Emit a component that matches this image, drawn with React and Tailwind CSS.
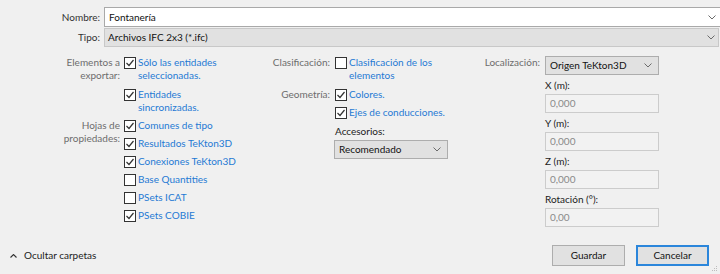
import React from 'react';

const Chevron = ({ className = '' }) => (
    <svg width="8" height="5" viewBox="0 0 8 5" className={className}>
        <polyline points="0.5,0.5 4,4 7.5,0.5" fill="none" stroke="#6b6b6b" strokeWidth="1" />
    </svg>
);

const Check = ({ checked }) => (
    <span className="mt-[1px] flex h-[12px] w-[12px] shrink-0 items-center justify-center border border-[#333] bg-white">
        {checked && (
            <svg width="10" height="10" viewBox="0 0 10 10">
                <polyline points="1.5,5 4,7.5 8.5,2" fill="none" stroke="#333" strokeWidth="1.2" />
            </svg>
        )}
    </span>
);

const Item = ({ checked, children }) => (
    <div className="flex items-start gap-[2px] leading-[13px] text-[#1f7ad4]">
        <Check checked={checked} />
        <span>{children}</span>
    </div>
);

const Label = ({ children }) => (
    <div className="text-right leading-[13px] text-[#6d6d6d]">{children}</div>
);

const Select = ({ value }) => (
    <div className="flex h-[19px] w-[114px] items-center justify-between border border-[#adadad] bg-[#e1e1e1] pl-[4px] pr-[6px] text-[#111]">
        <span>{value}</span>
        <Chevron />
    </div>
);

const NumField = ({ label, value }) => (
    <div className="mt-[4px] flex flex-col">
        <span className="leading-[13px] text-[#222]">{label}</span>
        <div className="mt-[2px] flex h-[19px] w-[114px] items-center border border-[#cccccc] bg-[#f2f2f2] pl-[4px] text-[#8a8a8a]">
            {value}
        </div>
    </div>
);

export default function App() {
    return (
        <div className="relative flex h-[274px] w-[720px] flex-col overflow-hidden bg-[#f0f0f0] font-['Lato',sans-serif] text-[10px]">
            {/* Nombre / Tipo */}
            <div className="flex flex-col gap-[1px] pt-[7px]">
                <div className="flex items-center">
                    <span className="w-[100px] text-right text-[#333]">Nombre:</span>
                    <div className="ml-[4px] flex h-[20px] flex-1 items-center justify-between border border-r-0 border-[#a9a9a9] bg-white pl-[4px] pr-[4px] text-[#111]">
                        <span>Fontanería</span>
                        <Chevron />
                    </div>
                </div>
                <div className="flex items-center">
                    <span className="w-[100px] text-right text-[#333]">Tipo:</span>
                    <div className="ml-[4px] mr-[1px] flex h-[19px] flex-1 items-center justify-between border border-[#c8c8c8] bg-[#e1e1e1] pl-[3px] pr-[3px] text-[#111]">
                        <span>Archivos IFC 2x3 (*.ifc)</span>
                        <Chevron />
                    </div>
                </div>
            </div>

            {/* Opciones */}
            <div className="mt-[9px] flex">
                <div className="grid w-[262px] grid-cols-[120px_1fr] content-start gap-x-[4px] gap-y-[5px]">
                    <Label>Elementos a<br />exportar:</Label>
                    <div className="flex flex-col gap-[5.5px]">
                        <Item checked>Sólo las entidades<br />seleccionadas.</Item>
                        <Item checked>Entidades<br />sincronizadas.</Item>
                    </div>
                    <Label>Hojas de<br />propiedades:</Label>
                    <div className="flex flex-col gap-[5.2px]">
                        <Item checked>Comunes de tipo</Item>
                        <Item checked>Resultados TeKton3D</Item>
                        <Item checked>Conexiones TeKton3D</Item>
                        <Item>Base Quantities</Item>
                        <Item>PSets ICAT</Item>
                        <Item checked>PSets COBIE</Item>
                    </div>
                </div>

                <div className="grid w-[208px] grid-cols-[68px_1fr] content-start gap-x-[5px] gap-y-[5.5px]">
                    <Label>Clasificación:</Label>
                    <Item>Clasificación de los<br />elementos</Item>
                    <Label>Geometría:</Label>
                    <div className="flex flex-col gap-[5.5px]">
                        <Item checked>Colores.</Item>
                        <Item checked>Ejes de conducciones.</Item>
                        <div className="flex flex-col">
                            <span className="leading-[13px] text-[#222]">Accesorios:</span>
                            <div className="-ml-[1px] mt-[2.5px]">
                                <Select value="Recomendado" />
                            </div>
                        </div>
                    </div>
                </div>

                <div className="grid grid-cols-[70px_114px] content-start gap-x-[5px]">
                    <Label>Localización:</Label>
                    <div className="flex flex-col">
                        <Select value="Origen TeKton3D" />
                        <NumField label="X (m):" value="0,000" />
                        <NumField label="Y (m):" value="0,000" />
                        <NumField label="Z (m):" value="0,000" />
                        <NumField label="Rotación (°):" value="0,00" />
                    </div>
                </div>
            </div>

            {/* Pie */}
            <div className="mb-[8px] mt-auto flex h-[21px] items-center justify-between pl-[10px] pr-[11px]">
                <div className="flex items-center gap-[7px] text-[#222]">
                    <svg width="7" height="4" viewBox="0 0 7 4">
                        <polyline points="0.5,3.5 3.5,0.5 6.5,3.5" fill="none" stroke="#333" strokeWidth="1.1" />
                    </svg>
                    <span>Ocultar carpetas</span>
                </div>
                <div className="flex gap-[11px]">
                    <button className="h-[21px] w-[73px] border border-[#adadad] bg-[#e1e1e1] text-[#111]">Guardar</button>
                    <button className="h-[21px] w-[73px] border-2 border-[#2b86db] bg-[#e1e1e1] text-[#111]">Cancelar</button>
                </div>
            </div>

            <svg width="6" height="6" viewBox="0 0 6 6" className="absolute bottom-[2px] right-[2px]">
                <rect x="4" y="0" width="1" height="1" fill="#bdbdbd" />
                <rect x="2" y="2" width="1" height="1" fill="#bdbdbd" />
                <rect x="4" y="2" width="1" height="1" fill="#bdbdbd" />
                <rect x="0" y="4" width="1" height="1" fill="#bdbdbd" />
                <rect x="2" y="4" width="1" height="1" fill="#bdbdbd" />
                <rect x="4" y="4" width="1" height="1" fill="#bdbdbd" />
            </svg>
        </div>
    );
}
